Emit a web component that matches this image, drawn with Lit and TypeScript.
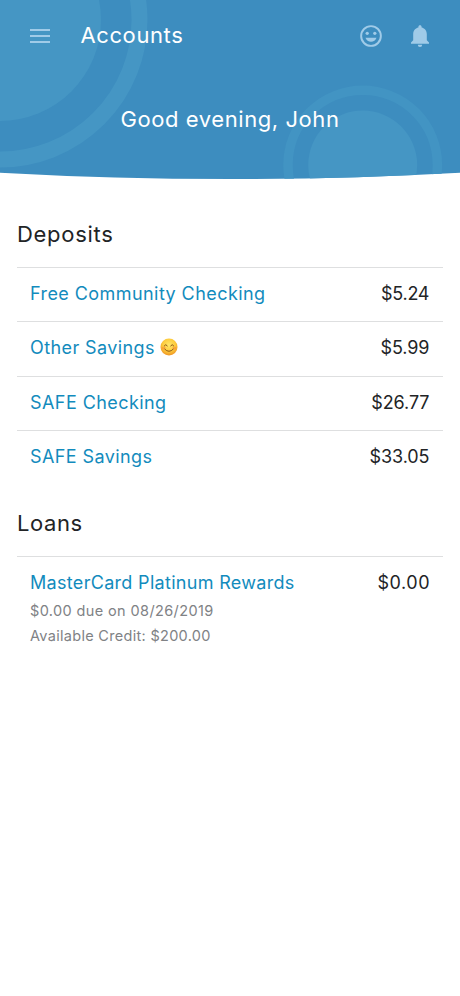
import { LitElement, html, css, nothing, svg } from "lit";
import { customElement, property } from "lit/decorators.js";

interface Account {
  name: string;
  amount: string;
  spacing: number;
  amountSpacing: number;
  smile?: boolean;
  details?: { text: string; spacing: number }[];
}

const deposits: Account[] = [
  { name: "Free Community Checking", amount: "$5.24", spacing: 0.43, amountSpacing: -0.25 },
  { name: "Other Savings", amount: "$5.99", spacing: 0.4, amountSpacing: -0.1 },
  { name: "SAFE Checking", amount: "$26.77", spacing: 0.43, amountSpacing: -0.1 },
  { name: "SAFE Savings", amount: "$33.05", spacing: 0.41, amountSpacing: -0.1 },
];
deposits[1].smile = true;

const loans: Account[] = [
  {
    name: "MasterCard Platinum Rewards",
    amount: "$0.00",
    spacing: 0.31,
    amountSpacing: 0.55,
    details: [
      { text: "$0.00 due on 08/26/2019", spacing: 0.38 },
      { text: "Available Credit: $200.00", spacing: 0.3 },
    ],
  },
];

const smileEmoji = svg`
  <defs>
    <radialGradient id="face" cx="50%" cy="38%" r="62%">
      <stop offset="0" stop-color="#ffe76a" />
      <stop offset="0.6" stop-color="#fdcb3c" />
      <stop offset="1" stop-color="#ee9322" />
    </radialGradient>
  </defs>
  <circle cx="9" cy="9" r="8.5" fill="url(#face)" />
  <ellipse cx="3.7" cy="10" rx="2" ry="1.5" fill="#f78a3a" opacity="0.55" />
  <ellipse cx="14.3" cy="10" rx="2" ry="1.5" fill="#f78a3a" opacity="0.55" />
  <path d="M4.3 7.8Q5.8 5.3 7.3 7.8M10.7 7.8Q12.2 5.3 13.7 7.8M4.8 11.2Q9 15.6 13.2 11.2"
    fill="none" stroke="#8a5318" stroke-width="1" stroke-linecap="round" />`;

@customElement("account-section")
class AccountSection extends LitElement {
  @property() heading = "";
  @property({ type: Number }) spacing = 0;
  @property({ attribute: false }) accounts: Account[] = [];

  static styles = css`
    :host { display: block; }
    h2 {
      margin: 0; height: 56px; line-height: 47px; box-sizing: border-box;
      font-size: 22px; font-weight: 400; color: #222426;
    }
    .row {
      border-top: 1px solid #dedfe0; box-sizing: border-box; min-height: 54.4px;
      padding: 13px 13.5px 0 13px; line-height: 26px; font-size: 18px;
    }
    .main { display: flex; justify-content: space-between; white-space: nowrap; }
    .name { display: flex; align-items: center; color: #128bbd; }
    .amount { color: #222426; }
    .emoji { width: 18px; height: 18px; margin: -3px 0 0 5px; }
    .detail { font-size: 14.5px; line-height: 25.5px; color: #808285; white-space: nowrap; }
    .details { padding-top: 2.4px; }
  `;

  render() {
    return html`
      <h2 style="letter-spacing:${this.spacing}px">${this.heading}</h2>
      ${this.accounts.map((a) => html`
        <div class="row">
          <div class="main">
            <span class="name"><span style="letter-spacing:${a.spacing}px">${a.name}</span>${a.smile
              ? html`<svg class="emoji" viewBox="0 0 18 18">${smileEmoji}</svg>` : nothing}</span>
            <span class="amount" style="letter-spacing:${a.amountSpacing}px;margin-right:${-a.amountSpacing}px">${a.amount}</span>
          </div>
          ${a.details ? html`<div class="details">${a.details.map((d) =>
            html`<div class="detail" style="letter-spacing:${d.spacing}px">${d.text}</div>`)}</div>` : nothing}
        </div>`)}
    `;
  }
}

@customElement("app-root")
class AppRoot extends LitElement {
  static styles = css`
    :host {
      display: block; min-height: 996px; background: #fff;
      font-family: Inter, "Liberation Sans", sans-serif;
    }
    header { position: relative; height: 180px; color: #fff; }
    .backdrop { position: absolute; inset: 0; width: 100%; height: 100%; }
    .bar { position: relative; display: flex; align-items: center; height: 72px; padding: 0 27px 0 30px; }
    .menu { width: 20px; height: 14px; }
    h1 { margin: 0 0 3px 30.5px; flex: 1; font-size: 22px; line-height: 28px; font-weight: 400; letter-spacing: 0.6px; }
    .face { width: 26px; height: 26px; }
    .bell { width: 26px; height: 26px; margin-left: 23px; }
    .icon { fill: #a0cbe8; display: block; }
    .greeting {
      position: relative; margin: 0; padding-top: 33px; text-align: center; font-size: 22px; line-height: 28px;
      letter-spacing: 0.57px;
    }
    main { padding: 31px 17px 0; }
    .loans { display: block; margin-top: 15px; }
  `;

  render() {
    return html`
      <header>
        <svg class="backdrop" viewBox="0 0 460 180">
          <clipPath id="curve"><path d="M0 0H460V172.7Q230 185.5 0 172.7Z" /></clipPath>
          <g clip-path="url(#curve)">
            <rect width="460" height="180" fill="#3d8dbf" />
            <circle cx="0" cy="20" r="101" fill="#4596c4" />
            <circle cx="0" cy="20" r="139.5" fill="none" stroke="#4596c4" stroke-width="16" />
            <circle cx="362.7" cy="165" r="54.5" fill="#4596c4" />
            <circle cx="362.7" cy="165" r="74.7" fill="none" stroke="#4294c3" stroke-width="9.5" />
          </g>
        </svg>
        <div class="bar">
          <svg class="icon menu" viewBox="0 0 20 14"><path d="M0 0h20v2H0zM0 6h20v2H0zM0 12h20v2H0z" /></svg>
          <h1>Accounts</h1>
          <svg class="icon face" viewBox="0 0 24 24">
            <path d="M12 2a10 10 0 1 0 0 20 10 10 0 0 0 0-20zm0 18.2a8.2 8.2 0 1 1 0-16.4 8.2 8.2 0 0 1 0 16.4z" />
            <circle cx="8.5" cy="9.5" r="1.5" /><circle cx="15.5" cy="9.5" r="1.5" />
            <path d="M6.9 13.5h10.2C16.3 15.8 14.3 17.3 12 17.3S7.7 15.8 6.9 13.5z" />
          </svg>
          <svg class="icon bell" viewBox="0 0 26 26">
            <path d="M13 2.2c-1 0-1.6.7-1.6 1.7v.5C8.2 5.1 6.2 7.8 6.2 11v6.2L4 19.6v1.2h18v-1.2l-2.2-2.4V11c0-3.2-2-5.9-5.2-6.6v-.5c0-1-.6-1.7-1.6-1.7zM10.8 21.8a2.2 2.2 0 0 0 4.4 0z" />
          </svg>
        </div>
        <p class="greeting">Good evening, John</p>
      </header>
      <main>
        <account-section heading="Deposits" .spacing=${0.7} .accounts=${deposits}></account-section>
        <account-section class="loans" heading="Loans" .spacing=${0.6} .accounts=${loans}></account-section>
      </main>
    `;
  }
}
